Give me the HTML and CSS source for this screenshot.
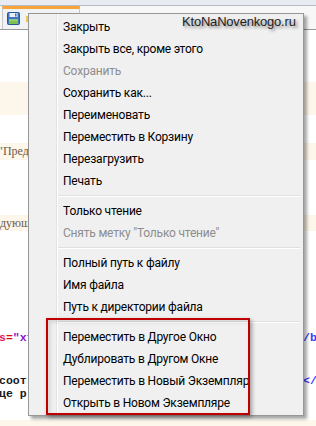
FILE: index.html
```html
<!DOCTYPE html>
<html>
<head>
  <title>Контекстное меню вкладки</title>
  <link rel="stylesheet" href="styles.css">
</head>
<body>

<div class="window">
  <div class="topbar"></div>

  <div class="tabstrip">
    <div class="tab">
      <svg class="save-icon" width="13" height="13" viewBox="0 0 13 13">
        <rect x="0.5" y="0.5" width="12" height="12" rx="1" fill="#3f74c0" stroke="#2a5596"/>
        <rect x="2.5" y="1" width="8" height="4" fill="#e9eef7"/>
        <rect x="8" y="1.5" width="1.5" height="3" fill="#3f74c0"/>
        <rect x="2" y="7.5" width="9" height="4.5" fill="#7cc34e"/>
        <rect x="2" y="7.5" width="9" height="1" fill="#b4e08c"/>
      </svg>
      <span class="open-icon"></span>
    </div>
  </div>

  <div class="editor">
    <div class="line gap-52"></div>
    <div class="line marked h-33"></div>
    <div class="line gap-28"></div>
    <div class="line marked h-17 prose"><span class="quote">"</span>Пред</div>
    <div class="line gap-55"></div>
    <div class="line marked h-16 prose">дующ</div>
    <div class="line gap-100"></div>
    <div class="line h-13 code">
      <span class="left"><span class="attr">s</span><span class="eq">=</span><span class="val">"xt</span></span>
      <span class="right tag">/b</span>
    </div>
    <div class="line gap-30"></div>
    <div class="line h-13 code">
      <span class="left">соот</span>
      <span class="right tag">&lt;/l</span>
    </div>
    <div class="line h-13 code">
      <span class="left">це р</span>
    </div>
    <div class="line gap-20"></div>
    <div class="line marked h-6"></div>
  </div>

  <div class="menu">
    <div class="item">Закрыть</div>
    <div class="item">Закрыть все, кроме этого</div>
    <div class="item disabled">Сохранить</div>
    <div class="item">Сохранить как...</div>
    <div class="item">Переименовать</div>
    <div class="item">Переместить в Корзину</div>
    <div class="item">Перезагрузить</div>
    <div class="item">Печать</div>
    <div class="separator"></div>
    <div class="item">Только чтение</div>
    <div class="item disabled">Снять метку "Только чтение"</div>
    <div class="separator"></div>
    <div class="item">Полный путь к файлу</div>
    <div class="item">Имя файла</div>
    <div class="item">Путь к директории файла</div>
    <div class="separator"></div>
    <div class="item">Переместить в Другое Окно</div>
    <div class="item">Дублировать в Другом Окне</div>
    <div class="item">Переместить в Новый Экземпляр</div>
    <div class="item">Открыть в Новом Экземпляре</div>
  </div>

  <div class="highlight"></div>

  <div class="watermark">KtoNaNovenkogo.ru</div>
</div>

</body>
</html>
```

FILE: styles.css
```css
body { margin: 0px; background: #ffffff; }

.window {
  position: relative;
  width: 316px;
  height: 426px;
  overflow: hidden;
  background: #ffffff;
}

.topbar {
  height: 5px;
  background: #e8ebf1;
  border-bottom: 1px solid #b9bcc3;
}

.tabstrip {
  height: 23px;
  background: #f7f7f7;
  border-bottom: 1px solid #9a9a9a;
  padding-left: 2px;
}
.tab {
  width: 78px;
  height: 23px;
  box-sizing: border-box;
  border-top: 3px solid #f5a53c;
  border-left: 1px solid #c7c7c7;
  border-right: 1px solid #c7c7c7;
  background: #f1f2f4;
  display: flex;
  align-items: flex-start;
  padding: 3px 0 0 4px;
  gap: 6px;
}
.save-icon { display: block; }
.open-icon {
  width: 4px;
  height: 6px;
  margin-top: 4px;
  background: #efc65a;
}

/* editor behind the menu */
.line { display: flex; align-items: center; white-space: nowrap; overflow: hidden; }
.marked { background: #fdf6ea; }
.gap-20 { height: 20px; }
.gap-28 { height: 28px; }
.gap-30 { height: 30px; }
.gap-52 { height: 52px; }
.gap-55 { height: 55px; }
.gap-100 { height: 100px; }
.h-6 { height: 6px; }
.h-13 { height: 13px; }
.h-16 { height: 16px; }
.h-17 { height: 17px; }
.h-33 { height: 33px; }

.prose {
  font-family: "Liberation Serif", serif;
  font-size: 12px;
  color: #6a5c4e;
}
.quote { color: #6a5c4e; margin-left: -2px; }

.code {
  font-family: "Liberation Mono", monospace;
  font-size: 11.5px;
  line-height: 13px;
  font-weight: bold;
  color: #1a1a1a;
}
.code .left { flex: 1; overflow: hidden; margin-left: -1px; }
.code .right { width: 13px; overflow: hidden; }
.attr { color: #e0106a; }
.eq { color: #d01010; }
.val { color: #8a10d0; }
.tag { color: #3a3aff; }

/* context menu */
.menu {
  position: absolute;
  left: 28px;
  top: 13px;
  width: 276px;
  box-sizing: border-box;
  padding: 2px 2px 1px 2px;
  border: 1px solid #979797;
  background: linear-gradient(to right, #f0f0f0 27px, #e3e3e3 27px, #e3e3e3 28px, #ffffff 28px, #ffffff 29px, #f0f0f0 29px);
  box-shadow: 3px 3px 3px rgba(0, 0, 0, 0.35);
  font-family: Roboto, sans-serif;
  font-size: 12px;
  letter-spacing: -0.2px;
  color: #000000;
}
.item {
  height: 22px;
  line-height: 22px;
  padding-left: 32px;
  white-space: nowrap;
}
.disabled { color: #8d8d8d; }
.separator {
  height: 8px;
  box-sizing: border-box;
  padding-top: 3px;
  margin-left: 27px;
  margin-right: 1px;
}
.separator::before {
  content: "";
  display: block;
  height: 1px;
  background: #e0e0e0;
  border-bottom: 1px solid #ffffff;
}

.highlight {
  position: absolute;
  left: 46px;
  top: 318px;
  width: 204px;
  height: 97px;
  box-sizing: border-box;
  border: 2px solid #c00000;
  box-shadow: 2px 2px 4px rgba(0, 0, 0, 0.35), inset 2px 2px 4px rgba(0, 0, 0, 0.12);
}

.watermark {
  position: absolute;
  left: 182px;
  top: 14px;
  font-family: "Liberation Sans", sans-serif;
  font-size: 13px;
  letter-spacing: -0.2px;
  color: #1e1e1e;
  text-shadow: 2px 2px 3px rgba(0, 0, 0, 0.45);
}
```
